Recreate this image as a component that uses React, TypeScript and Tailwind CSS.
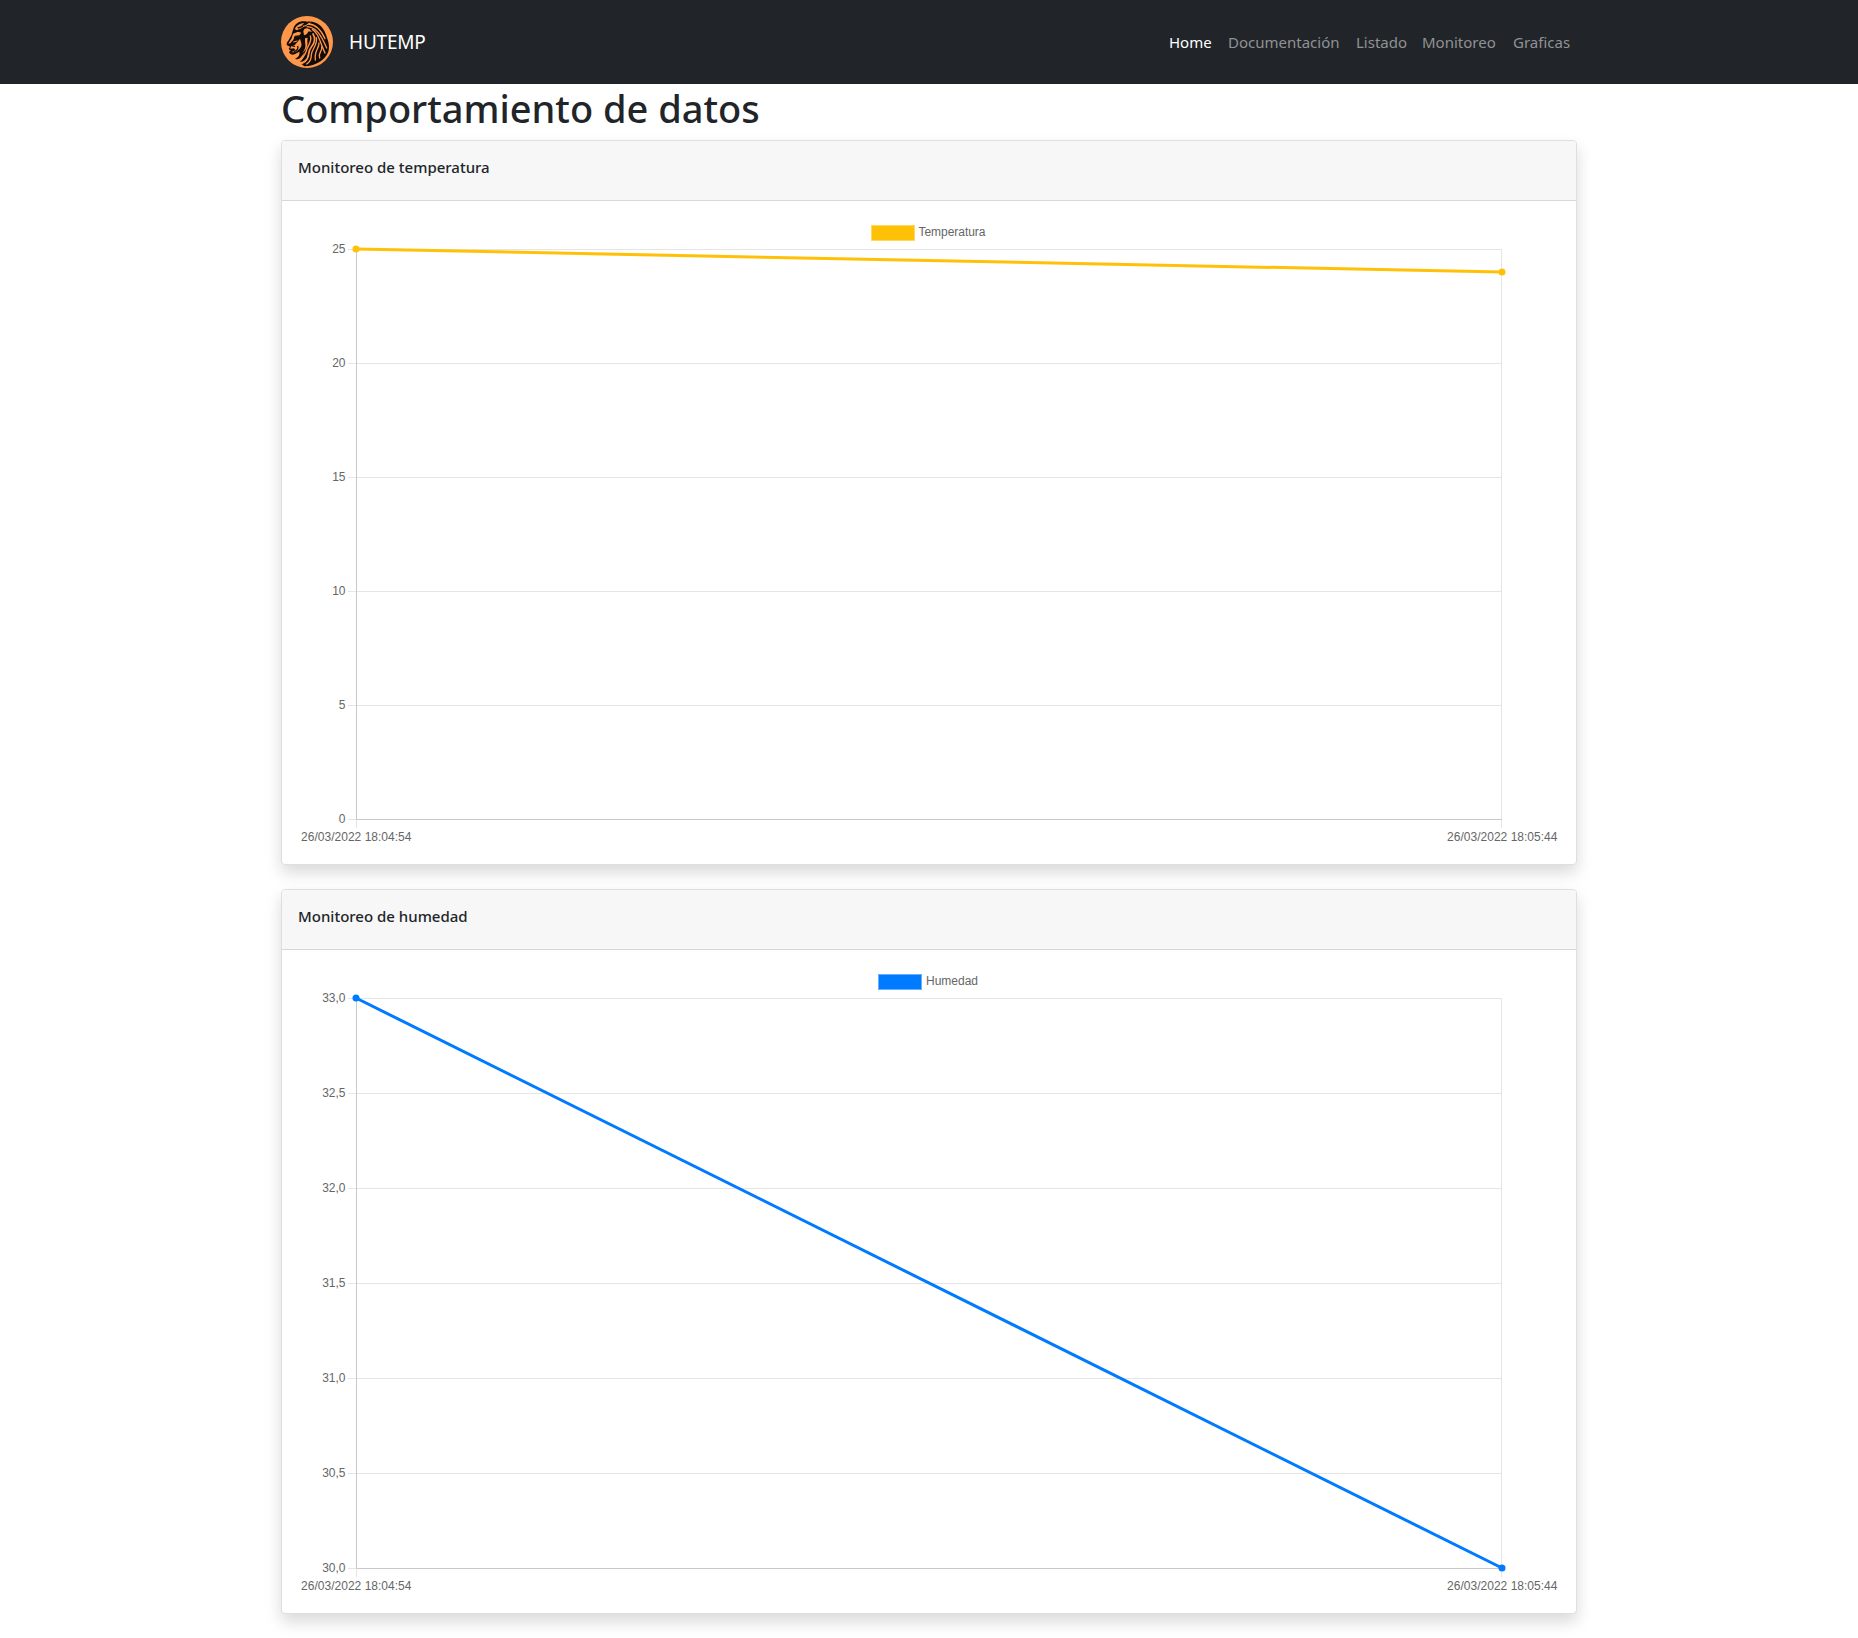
type ChartProps = {
  label: string;
  color: string;
  outline: string;
  ticks: string[];
  endY: number;
  legendX: number;
  labelX: number;
  labelWidth: number;
};

const LEFT = 58.5;
const RIGHT = 1203.5;
const TOP = 32.5;
const BOTTOM = 602.5;

function Lion() {
  return (
    <svg className="size-13 shrink-0" viewBox="0 0 156 156" aria-hidden="true">
      <circle cx="78" cy="78" r="78" fill="#ff974a" />
      <g fill="#130b06">
        <path d="M37 38 C42 20 60 12 78 17 C104 13 126 29 134 54 C143 76 147 92 142 107 C133 131 107 149 70 151 L62 145 C72 141 79 134 80 126 C72 133 64 139 57 137 C68 127 66 115 73 106 L62 121 C56 130 49 132 42 128 C52 124 57 116 55 107 L41 115 C34 118 27 115 24 108 L29 104 L23 99 L27 92 L18 88 C16 84 17 79 21 76 L31 58 Z" />
      </g>
      <g fill="#ff974a">
        <path d="M36 53 L51 47 L61 50 L55 58 L42 59 L37 71 L28 82 L22 83 L32 67 Z" />
        <path d="M30 91 L42 86 L51 76 L57 68 L61 82 C64 94 54 101 47 106 L39 109 L31 109 L43 102 L39 97 L28 98 Z" />
        <path d="M41 39 C47 28 56 22 70 21 L60 30 L75 28 L62 37 L48 43 Z" />
        <path d="M67 46 C69 36 77 35 86 40 L93 48 L83 46 L77 55 L69 58 Z" />
        <path d="M72 67 C71 88 79 92 64 111 C88 91 76 79 80 65 Z" />
      </g>
      <g fill="none" stroke="#ff974a" strokeLinecap="round" strokeWidth="4">
        <path d="M82 24 C105 25 121 44 132 68" />
        <path d="M78 32 C105 34 119 54 137 96" />
        <path d="M94 40 C113 52 115 74 132 111" />
        <path d="M96 54 C105 68 102 80 91 93 C76 111 91 119 72 136" strokeWidth="5" />
        <path d="M106 65 C111 88 92 97 91 117 C91 132 82 141 77 144" />
        <path d="M114 81 C115 96 99 106 103 132" />
        <path d="M122 93 C125 106 110 110 116 126" />
        <path d="M88 60 C95 77 79 89 76 105 C73 116 66 123 60 132" />
        <path d="M38 78 L48 75 M43 64 L54 64 M87 21 L72 30" strokeWidth="3" />
      </g>
      <g fill="none" stroke="#130b06" strokeWidth="4">
        <path d="M39 64 L53 63 L57 69 M31 89 L42 91 M50 90 C53 99 47 105 38 107" />
        <path d="M50 36 L66 31 M44 46 L65 39" />
      </g>
    </svg>
  );
}

function LineChart({ label, color, outline, ticks, endY, legendX, labelX, labelWidth }: ChartProps) {
  const step = (BOTTOM - TOP) / (ticks.length - 1);
  return (
    <svg
      className="block h-[631px] w-[1262px] font-['Liberation_Sans',Arial,sans-serif] text-[12px]"
      viewBox="0 0 1262 631"
      role="img"
      aria-label={label}
    >
      <rect x={legendX + 0.5} y="8.5" width="43" height="15" fill={color} stroke={outline} />
      <text x={labelX} y="19" fill="#666" textLength={labelWidth}>{label}</text>
      {ticks.map((tick, i) => (
        <g key={tick}>
          <line x1="50" x2="1204" y1={TOP + i * step} y2={TOP + i * step} stroke="#e5e5e5" />
          <text x="47.5" y={TOP + i * step + 3.5} fill="#666" textAnchor="end">{tick}</text>
        </g>
      ))}
      <path d={`M${LEFT} ${TOP}V611M${RIGHT} ${TOP}V611`} stroke="#e5e5e5" />
      <path d={`M${LEFT} ${TOP}V${BOTTOM}H1204`} fill="none" stroke="#c9c9c9" />
      <text x="3" y="624" fill="#666" textLength="110.5">26/03/2022 18:04:54</text>
      <text x="1149" y="624" fill="#666" textLength="110.5">26/03/2022 18:05:44</text>
      <line x1="58" y1="32" x2="1204" y2={endY} stroke={color} strokeWidth="3" />
      <circle cx="58" cy="32" r="3.5" fill={color} />
      <circle cx="1204" cy={endY} r="3.5" fill={color} />
    </svg>
  );
}

function ChartCard({ title, tracking, chart }: { title: string; tracking: string; chart: ChartProps }) {
  return (
    <section className="mb-6 h-[725px] rounded-[4px] border border-[#dfdfdf] bg-white shadow-[0_8px_16px_rgba(0,0,0,0.15)]">
      <header className="h-[60px] rounded-t-[3px] border-b border-[#d7d7d7] bg-[#f7f7f7] px-4 pt-[14px]">
        <h2 className={`text-[15px] leading-6 font-medium whitespace-nowrap ${tracking}`}>{title}</h2>
      </header>
      <div className="p-4">
        <LineChart {...chart} />
      </div>
    </section>
  );
}

const links = [
  { name: "Home", style: "w-[59px] text-white" },
  { name: "Documentación", style: "w-[128px] text-[#909294]" },
  { name: "Listado", style: "w-[66px] text-[#909294]" },
  { name: "Monitoreo", style: "w-[91px] text-[#909294]" },
  { name: "Graficas", style: "w-[72px] text-[#909294]" },
];

export default function App() {
  return (
    <div className="min-h-[1638px] bg-white font-['Noto_Sans','Open_Sans',sans-serif] text-[#212529]">
      <nav className="h-[84px] bg-[#212529]">
        <div className="mx-auto flex h-full w-[1296px] items-center">
          <Lion />
          <a className="ml-4 text-[19px] leading-[30px] tracking-[-0.2px] text-white">HUTEMP</a>
          <div className="ml-auto flex">
            {links.map((link) => (
              <a key={link.name} className={`px-2 text-[15px] leading-6 whitespace-nowrap ${link.style}`}>
                {link.name}
              </a>
            ))}
          </div>
        </div>
      </nav>
      <main className="mx-auto w-[1296px]">
        <h1 className="mb-2 h-12 text-[38px] leading-[48px] font-medium whitespace-nowrap">Comportamiento de datos</h1>
        <ChartCard
          title="Monitoreo de temperatura"
          tracking="tracking-normal"
          chart={{
            label: "Temperatura",
            color: "#ffc107",
            outline: "#ffd860",
            ticks: ["25", "20", "15", "10", "5", "0"],
            endY: 55,
            legendX: 573,
            labelX: 620.5,
            labelWidth: 67,
          }}
        />
        <ChartCard
          title="Monitoreo de humedad"
          tracking="tracking-normal"
          chart={{
            label: "Humedad",
            color: "#007bff",
            outline: "#66b0ff",
            ticks: ["33,0", "32,5", "32,0", "31,5", "31,0", "30,5", "30,0"],
            endY: 602,
            legendX: 580,
            labelX: 628,
            labelWidth: 52,
          }}
        />
      </main>
    </div>
  );
}
